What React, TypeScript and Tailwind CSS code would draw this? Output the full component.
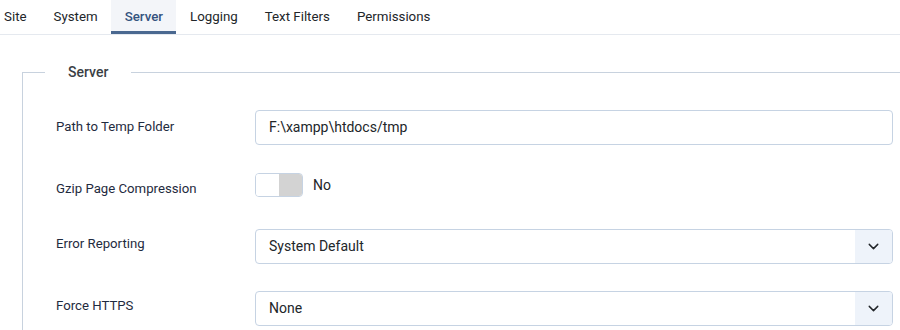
import { ChevronDown } from "lucide-react";

const tabs = ["Site", "System", "Server", "Logging", "Text Filters", "Permissions"];

function Select({ value }: { value: string }) {
  return (
    <div className="flex h-[35px] flex-1 items-stretch overflow-hidden rounded-[4px] border border-[#c6d3e3] bg-white">
      <div className="flex flex-1 items-center pl-[13px] text-[14px] text-[#22262a]">{value}</div>
      <div className="flex w-[37px] items-center justify-center bg-[#eef3fa]">
        <ChevronDown className="h-[17px] w-[17px] text-[#22262a]" strokeWidth={2} />
      </div>
    </div>
  );
}

export default function App() {
  return (
    <div className="h-[330px] w-[900px] overflow-hidden bg-white font-['Roboto',sans-serif]">
      {/* Tabs */}
      <div className="flex h-[35px] border-b border-[#e5e9ef]">
        {tabs.map((t, i) => (
          <div
            key={t}
            className={
              t === "Server"
                ? "flex items-center border-b-[3px] border-[#4a6890] bg-[#f3f5f9] px-[13.5px] pt-[3px] text-[13.3px] font-medium text-[#34537f]"
                : i === 0
                ? "-ml-[9.5px] flex items-center px-[13.5px] text-[13.3px] text-[#22262a]"
                : "flex items-center px-[13.5px] text-[13.3px] text-[#22262a]"
            }
          >
            {t}
          </div>
        ))}
      </div>

      {/* Fieldset */}
      <fieldset className="ml-[22px] mt-[27px] border-l border-t border-[#c8d2de] pb-4 pr-[7px]">
        <legend className="ml-[22px] px-[23px] text-[14px] font-medium text-[#3a3f45]">Server</legend>

        <div className="mt-[27px] flex flex-col pl-[33px]">
          <div className="flex items-start">
            <label className="w-[199px] pt-[7px] text-[13.2px] text-[#1f2b40]">Path to Temp Folder</label>
            <div className="flex h-[35px] flex-1 items-center rounded-[4px] border border-[#c6d3e3] bg-white pl-[13px] text-[14px] text-[#22262a]">
              F:\xampp\htdocs/tmp
            </div>
          </div>

          <div className="mt-[28px] flex items-start">
            <label className="w-[199px] pt-[6px] text-[13.2px] text-[#1f2b40]">Gzip Page Compression</label>
            <div className="flex items-center">
              <div className="flex h-[24px] w-[48px] overflow-hidden rounded-[4px] border border-[#c6d3e3]">
                <div className="flex-1 bg-white" />
                <div className="flex-1 bg-[#d3d3d3]" />
              </div>
              <span className="ml-[10px] text-[14px] text-[#22262a]">No</span>
            </div>
          </div>

          <div className="mt-[30px] flex items-start">
            <label className="w-[199px] pt-[5px] text-[13.2px] text-[#1f2b40]">Error Reporting</label>
            <Select value="System Default" />
          </div>

          <div className="mt-[27px] flex items-start">
            <label className="w-[199px] pt-[5px] text-[13.2px] text-[#1f2b40]">Force HTTPS</label>
            <Select value="None" />
          </div>
        </div>
      </fieldset>
    </div>
  );
}
